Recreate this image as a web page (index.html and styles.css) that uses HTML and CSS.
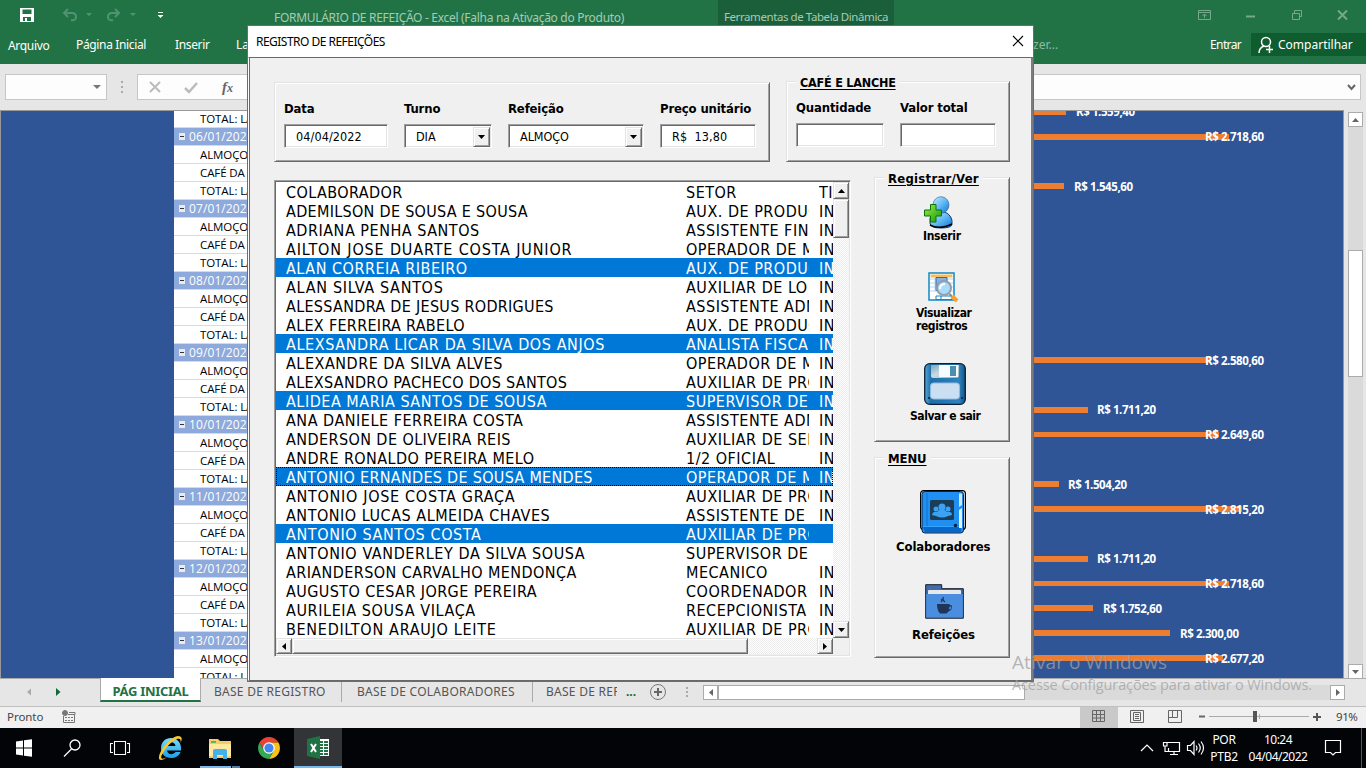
FILE: index.html
```html
<!DOCTYPE html>
<html lang="pt-BR">
<head>
<meta charset="utf-8">
<title>FORMULÁRIO DE REFEIÇÃO - Excel</title>
<link rel="stylesheet" href="styles.css">
</head>
<body>
<header class="titlebar">
  <svg class="quick" width="180" height="31" viewBox="0 0 180 31">
    <path d="M20 8h14v14H20z" fill="#fff"/><path d="M22.500 9.500h9v4.500h-9zM23 17h8v4h-8z" fill="#217346"/><path d="M25 18h2v3h-2z" fill="#fff"/>
    <g fill="none" stroke="#4f9470" stroke-width="2"><path d="M68 9l-4 4 4 4M64 13h8q4 0 4 4t-5 3"/><path d="M115 9l4 4-4 4M119 13h-7q-4 0-4 4t5 3"/></g>
    <path d="M86 13h6l-3 3zM130 13h6l-3 3z" fill="#4f9470"/><path d="M158 12h5v1h-5zM157.500 15h6l-3 3z" fill="#fff"/>
  </svg>
  <span class="doc-title">FORMULÁRIO DE REFEIÇÃO - Excel (Falha na Ativação do Produto)</span>
  <span class="tool-tab">Ferramentas de Tabela Dinâmica</span>
  <svg class="winctl" width="160" height="31" viewBox="0 0 160 31" fill="none" stroke="#75a88c">
    <path d="M4.500 10.500h12v9h-12zM4.500 12.500h12M10.500 18v-4M8.500 16l2-2 2 2"/><path d="M52 16.500h9" stroke-width="2"/><path d="M98.500 13.500h7v6h-7zM100.500 13v-2.500h7v6H106"/><path d="M144 10.500l9 9m0-9l-9 9" stroke-width="2"/>
  </svg>
</header>
<nav class="ribbon">
  <span class="r1">Arquivo</span><span class="r2">Página Inicial</span><span class="r3">Inserir</span><span class="r4">La</span>
  <span class="tell">zer...</span><span class="enter">Entrar</span>
  <span class="share"><svg width="16" height="18" viewBox="0 0 16 18" fill="none" stroke="#fff" stroke-width="1.500"><circle cx="8" cy="6" r="4.500"/><path d="M1 17q0-5 5-7M8 13.500h7M11.500 10v7"/></svg><span>Compartilhar</span></span>
</nav>
<div class="formula">
  <div class="namebox"><svg width="8" height="5"><path d="M0 0h8l-4 4z" fill="#777"/></svg></div>
  <svg class="dots" width="3" height="12"><path d="M0 0h2v2H0zM0 5h2v2H0zM0 10h2v2H0z" fill="#aaa"/></svg>
  <div class="fxbar">
    <svg width="110" height="25" viewBox="0 0 110 25"><path d="M12 7l10 10m0-10L12 17" stroke="#bbb" stroke-width="2"/><path d="M47 13l4 4 8-9" fill="none" stroke="#bbb" stroke-width="2.500"/><text x="84" y="17" font-family="Liberation Serif, serif" font-style="italic" font-weight="bold" font-size="15" fill="#666">f<tspan font-size="12">x</tspan></text></svg>
    <svg class="chev" width="9" height="7"><path d="M1 1l3.500 4L8 1" fill="none" stroke="#666" stroke-width="2"/></svg>
  </div>
</div>
<main class="workspace">
  <div class="sheet">
    <div class="pivot">
      <div class="pr first">TOTAL: LA</div>
      <div class="pr head"><i></i>06/01/202</div><div class="pr">ALMOÇO</div><div class="pr">CAFÉ DA</div><div class="pr">TOTAL: LA</div>
      <div class="pr head"><i></i>07/01/202</div><div class="pr">ALMOÇO</div><div class="pr">CAFÉ DA</div><div class="pr">TOTAL: LA</div>
      <div class="pr head"><i></i>08/01/202</div><div class="pr">ALMOÇO</div><div class="pr">CAFÉ DA</div><div class="pr">TOTAL: LA</div>
      <div class="pr head"><i></i>09/01/202</div><div class="pr">ALMOÇO</div><div class="pr">CAFÉ DA</div><div class="pr">TOTAL: LA</div>
      <div class="pr head"><i></i>10/01/202</div><div class="pr">ALMOÇO</div><div class="pr">CAFÉ DA</div><div class="pr">TOTAL: LA</div>
      <div class="pr head"><i></i>11/01/202</div><div class="pr">ALMOÇO</div><div class="pr">CAFÉ DA</div><div class="pr">TOTAL: LA</div>
      <div class="pr head"><i></i>12/01/202</div><div class="pr">ALMOÇO</div><div class="pr">CAFÉ DA</div><div class="pr">TOTAL: LA</div>
      <div class="pr head"><i></i>13/01/202</div><div class="pr">ALMOÇO</div><div class="pr">TOTAL: LA</div>
    </div>
    <svg class="chart" width="310" height="567" viewBox="1033 111 310 567">
      <g fill="#ed7d31"><path d="M1033 109h33v6h-33zM1033 134h196v6h-196zM1033 183h31v6h-31zM1033 357h177v6h-177zM1033 407h55v6h-55zM1033 432h186v5h-186zM1033 481h26v6h-26zM1033 506h209v6h-209zM1033 556h55v6h-55zM1033 581h196v5h-196zM1033 605h60v6h-60zM1033 630h137v6h-137zM1033 655h190v6h-190z"/></g>
      <g class="vals">
        <text x="1076" y="116" textLength="59">R$ 1.559,40</text><text x="1205" y="141" textLength="59">R$ 2.718,60</text>
        <text x="1074" y="191" textLength="59">R$ 1.545,60</text><text x="1205" y="365" textLength="59">R$ 2.580,60</text>
        <text x="1097" y="414" textLength="59">R$ 1.711,20</text><text x="1205" y="439" textLength="59">R$ 2.649,60</text>
        <text x="1068" y="489" textLength="59">R$ 1.504,20</text><text x="1205" y="514" textLength="59">R$ 2.815,20</text>
        <text x="1097" y="563" textLength="59">R$ 1.711,20</text><text x="1205" y="588" textLength="59">R$ 2.718,60</text>
        <text x="1103" y="613" textLength="59">R$ 1.752,60</text><text x="1180" y="638" textLength="59">R$ 2.300,00</text>
        <text x="1205" y="663" textLength="59">R$ 2.677,20</text>
      </g>
    </svg>
  </div>
  <div class="xl-vscroll"><span class="xb"><svg width="7" height="4"><path d="M0 4h7L3.500 0z" fill="#666"/></svg></span><span class="xthumb"></span><span class="xb"><svg width="7" height="4"><path d="M0 0h7L3.500 4z" fill="#666"/></svg></span></div>
</main>
<div class="tabs">
  <span class="tabnav"><svg width="100" height="27"><path d="M31 9.500v7l-4-3.500z" fill="#aaa"/><path d="M56 9v8l4.500-4z" fill="#0e6b38"/></svg></span>
  <b class="tab-active">PÁG INICIAL</b><span class="tab t2">BASE DE REGISTRO</span><span class="tab t3">BASE DE COLABORADORES</span><span class="tab t4">BASE DE REF</span><b class="more">...</b>
  <svg class="plus" width="46" height="27" fill="none"><circle cx="10" cy="13" r="7.500" stroke="#777"/><path d="M6 13h8M10 9v8" stroke="#666" stroke-width="2"/><path d="M38 8h2v2h-2zM38 12h2v2h-2zM38 16h2v2h-2z" fill="#aaa"/></svg>
  <div class="xl-hscroll"><span class="xb"><svg width="4" height="7"><path d="M4 0v7L0 3.500z" fill="#666"/></svg></span><span class="hthumb"></span><span class="xb last"><svg width="4" height="7"><path d="M0 0v7l4-3.500z" fill="#666"/></svg></span></div>
</div>
<div class="status">
  <span class="ready">Pronto</span>
  <svg width="14" height="14" fill="none" stroke="#777"><path d="M7 2.500h6v2H6M1.500 6v6.500h11V5M3 7.500h2m1 0h2m1 0h2M3 10.500h2m1 0h2m1 0h2"/><circle cx="3" cy="3" r="2.500" fill="#777"/></svg>
  <svg class="views" width="234" height="21" fill="none" stroke="#666"><path d="M0 0h38v21H0z" fill="#c9c9c9" stroke="none"/><path d="M12.500 3.500h12v11h-12zM12.500 7.500h12M12.500 11h12M16.500 3v12M20.500 3v12"/><path d="M50.500 3.500h13v12h-13zM53.500 5.500h7v8h-7zM55 7.500h4M55 9.500h4M55 11.500h4"/><path d="M88.500 3.500h13v12h-13zM88.500 10.500h9V4M92.500 4v6.500"/><path d="M119 9.500h6" stroke-width="2"/><path d="M129 9.500h100M179.500 7v5" stroke="#aaa"/><path d="M173 4h4v11h-4z" fill="#555" stroke="none"/></svg>
  <svg class="zplus" width="8" height="8"><path d="M0 4h8M4 0v8" stroke="#555" stroke-width="2"/></svg>
  <span class="pct">91%</span>
</div>
<footer class="taskbar">
  <svg width="342" height="40" viewBox="0 0 342 40">
    <defs><linearGradient id="ieb" x2="0" y2="1"><stop stop-color="#78dcff"/><stop offset="1" stop-color="#19a0e8"/></linearGradient></defs>
    <path d="M16 13.500l7-1v7h-7zM24 12.300l8-1.100v8.300h-8zM16 20.500h7v7l-7-1zM24 20.500h8v8.300l-8-1.100z" fill="#fff"/>
    <g fill="none" stroke="#fff" stroke-width="1.300"><circle cx="75" cy="17" r="5"/><path d="M71.500 21L64 28.500"/><path d="M114.500 13.500h11v13h-11zM113 15.500h-2.500v9h2.500M127 15.500h2.500v9H127" stroke-width="1.100"/></g>
    <path fill-rule="evenodd" d="M161 20c0-6 4.500-10 10-10s10 4 10 10v2.500h-14c.5 4 6 5 8.500 1.500h5c-1.500 4-5 6-9.500 6-6 0-10-4-10-10zm6-2h8.500c-.5-5-8-5-8.500 0z" fill="url(#ieb)"/><path d="M163 25c-4 6-1 7 4 4-4 4-9 4-8 0 1-8 12-20 19-21 5 0 4 4 2.500 7 .5-3 0-5-3.500-4-5 2-11 8-14 14z" fill="#f8c832"/>
    <path d="M209 11h9l2 2h11v17h-22z" fill="#f5cd68"/><path d="M211 13h5v2h-5z" fill="#58b85c"/><path d="M209 16h22v12h-22z" fill="#ffe9a0"/><path d="M213 23q0-2 2-2h10q2 0 2 2v8h-4v-4h-6v4h-4z" fill="#43b2ec"/>
    <path d="M200 38h31v2h-31z" fill="#76b9ed"/><path d="M232 38h8v2h-8z" fill="#527ea8"/>
    <path d="M269 14.500h9.500a11 11 0 0 0-19 0l4.700 8z" fill="#ea4335"/><path d="M273.800 22.800L269 31a11 11 0 0 0 9.500-16.500H269z" fill="#fbc116"/><path d="M264.200 22.800l-4.700-8.300A11 11 0 0 0 269 31l4.800-8.200z" fill="#34a853"/><circle cx="269" cy="20" r="5.800" fill="#fff"/><circle cx="269" cy="20" r="4.600" fill="#4285f4"/>
    <path d="M294 0h48v40h-48z" fill="#333437"/><path d="M294 38h48v2h-48z" fill="#76b9ed"/><path d="M318 11h11v17h-11z" fill="#fff"/><path d="M320 13h3v2h-3zM324 13h4v2h-4zM320 16h3v2h-3zM324 16h4v2h-4zM320 19h3v2h-3zM324 19h4v2h-4zM320 22h3v2h-3zM324 22h4v2h-4zM320 25h3v2h-3zM324 25h4v2h-4z" fill="#207245"/><path d="M307 11l13-3v23l-13-3z" fill="#207245"/><path d="M311 16l5 8M316 16l-5 8" stroke="#fff" stroke-width="2"/>
  </svg>
  <svg class="tray" width="66" height="40" fill="none" stroke="#fff" stroke-width="1.200"><path d="M1 23l6-6 6 6M27 14.500h12.500v9H28.500V20M34 24v2.500M30 26.500h8M23.500 14.500h3.500v3.500h-3.500zM25 18v5.500h4M47.500 17.500h3l3.500-4v13l-3.500-4h-3zM56 17.500q2 2.500 0 5M58.500 15.500q3.500 4.500 0 9M61 13.500q5 6.500 0 13"/></svg>
  <span class="lang">POR<br>PTB2</span><span class="clock">10:24<br>04/04/2022</span>
  <svg class="notif" width="18" height="18" fill="none" stroke="#fff" stroke-width="1.200"><path d="M1.500 1.500h15v12H11.500L9 16 6.500 13.500h-5z"/></svg>
  <i class="peek"></i>
</footer>

<section class="dialog">
  <div class="dlg-title"><span>REGISTRO DE REFEIÇÕES</span><svg width="12" height="12"><path d="M1 1l10 10M11 1L1 11" stroke="#000" stroke-width="1.100"/></svg></div>
  <div class="dlg-body">
    <div class="top-row">
      <div class="frame f-main">
        <label class="fld w-data"><b>Data</b><span class="inp">04/04/2022</span></label>
        <label class="fld w-turno"><b>Turno</b><span class="inp combo">DIA<i class="btn"><svg width="7" height="4"><path d="M0 0h7L3.500 4z"/></svg></i></span></label>
        <label class="fld w-ref"><b>Refeição</b><span class="inp combo">ALMOÇO<i class="btn"><svg width="7" height="4"><path d="M0 0h7L3.500 4z"/></svg></i></span></label>
        <label class="fld w-preco"><b>Preço unitário</b><span class="inp">R$&nbsp; 13,80</span></label>
      </div>
      <div class="frame f-cafe"><u class="legend">CAFÉ E LANCHE</u>
        <label class="fld w-qtd"><b>Quantidade</b><span class="inp"></span></label>
        <label class="fld w-val"><b>Valor total</b><span class="inp"></span></label>
      </div>
    </div>
    <div class="bottom-row">
      <div class="list">
        <div class="rows">
          <div class="row kb"><span>COLABORADOR</span><span>SETOR</span><span>TIPO</span></div>
          <div class="row ka"><span>ADEMILSON DE SOUSA E SOUSA</span><span>AUX. DE PRODUÇ</span><span>INT</span></div>
          <div class="row kc"><span>ADRIANA PENHA SANTOS</span><span>ASSISTENTE FIN</span><span>INT</span></div>
          <div class="row kf"><span>AILTON JOSE DUARTE COSTA JUNIOR</span><span>OPERADOR DE M</span><span>INT</span></div>
          <div class="row kc sel"><span>ALAN CORREIA RIBEIRO</span><span>AUX. DE PRODUÇ</span><span>INT</span></div>
          <div class="row ke"><span>ALAN SILVA SANTOS</span><span>AUXILIAR DE LO</span><span>INT</span></div>
          <div class="row ka"><span>ALESSANDRA DE JESUS RODRIGUES</span><span>ASSISTENTE ADM</span><span>INT</span></div>
          <div class="row ka"><span>ALEX FERREIRA RABELO</span><span>AUX. DE PRODUÇ</span><span>INT</span></div>
          <div class="row kd sel"><span>ALEXSANDRA LICAR DA SILVA DOS ANJOS</span><span>ANALISTA FISCA</span><span>INT</span></div>
          <div class="row kc"><span>ALEXANDRE DA SILVA ALVES</span><span>OPERADOR DE M</span><span>INT</span></div>
          <div class="row ka"><span>ALEXSANDRO PACHECO DOS SANTOS</span><span>AUXILIAR DE PRO</span><span>INT</span></div>
          <div class="row kc sel"><span>ALIDEA MARIA SANTOS DE SOUSA</span><span>SUPERVISOR DE</span><span>INT</span></div>
          <div class="row kc"><span>ANA DANIELE FERREIRA COSTA</span><span>ASSISTENTE ADM</span><span>INT</span></div>
          <div class="row kb"><span>ANDERSON DE OLIVEIRA REIS</span><span>AUXILIAR DE SER</span><span>INT</span></div>
          <div class="row kb"><span>ANDRE RONALDO PEREIRA MELO</span><span>1/2 OFICIAL</span><span>INT</span></div>
          <div class="row ka sel focus"><span>ANTONIO ERNANDES DE SOUSA MENDES</span><span>OPERADOR DE M</span><span>INT</span></div>
          <div class="row ke"><span>ANTONIO JOSE COSTA GRAÇA</span><span>AUXILIAR DE PRO</span><span>INT</span></div>
          <div class="row kc"><span>ANTONIO LUCAS ALMEIDA CHAVES</span><span>ASSISTENTE DE</span><span>INT</span></div>
          <div class="row kd sel"><span>ANTONIO SANTOS COSTA</span><span>AUXILIAR DE PRO</span><span></span></div>
          <div class="row kd"><span>ANTONIO VANDERLEY DA SILVA SOUSA</span><span>SUPERVISOR DE</span><span></span></div>
          <div class="row kb"><span>ARIANDERSON CARVALHO MENDONÇA</span><span>MECANICO</span><span>INT</span></div>
          <div class="row kb"><span>AUGUSTO CESAR JORGE PEREIRA</span><span>COORDENADOR</span><span>INT</span></div>
          <div class="row kd"><span>AURILEIA SOUSA VILAÇA</span><span>RECEPCIONISTA</span><span>INT</span></div>
          <div class="row ke"><span>BENEDILTON ARAUJO LEITE</span><span>AUXILIAR DE PRO</span><span>INT</span></div>
        </div>
        <div class="vs"><i class="btn"><svg width="7" height="4"><path d="M0 4h7L3.500 0z"/></svg></i><i class="btn vt"></i><i class="btn end"><svg width="7" height="4"><path d="M0 0h7L3.500 4z"/></svg></i></div>
        <div class="hs"><i class="btn"><svg width="4" height="7"><path d="M4 0v7L0 3.500z"/></svg></i><i class="btn ht"></i><i class="btn end"><svg width="4" height="7"><path d="M0 0v7l4-3.500z"/></svg></i></div>
      </div>
      <div class="side">
        <div class="frame f-reg"><u class="legend">Registrar/Ver</u>
          <div class="act a1">
            <svg width="30" height="34" viewBox="0 0 30 34"><defs><linearGradient id="pb" x2="1" y2="1"><stop stop-color="#c6ecff"/><stop offset=".5" stop-color="#62b9f5"/><stop offset="1" stop-color="#1273d6"/></linearGradient><linearGradient id="gr" x2="1" y2="1"><stop stop-color="#9cee4a"/><stop offset="1" stop-color="#149708"/></linearGradient></defs>
            <path d="M6 26q-1-8 6-10h9q8 4 7 12 0 4-11 4T6 27z" fill="url(#pb)" stroke="#0b3b78"/><path d="M6 29q9 5 22-1" fill="none" stroke="#000" stroke-width="1.500"/><ellipse cx="17" cy="9" rx="8" ry="8.300" fill="url(#pb)" stroke="#285f92" stroke-width=".6"/><path d="M6.500 8.500h5.500v5.500h5.500v6H12v6H6.500v-6h-6v-6h6z" fill="url(#gr)" stroke="#0b7307"/></svg>
            <b>Inserir</b></div>
          <div class="act a2">
            <svg width="31" height="31" viewBox="0 0 31 31"><path d="M1 1h25v27H1z" fill="#fff" stroke="#1286c3" stroke-width="1.500"/><path d="M2.500 2.500h22v3h-22z" fill="#f9bd54"/><path d="M2 7h23M2 11h23M2 15h23M2 19h23M7 6v14M18 6v19" stroke="#bcd8ef"/><path d="M8 5.500h11v13H8z" fill="#87b1e3" stroke="#356da8"/><path d="M8 24h16v3.500H8zM13 24v4" fill="#fff" stroke="#1286c3"/><circle cx="16" cy="16" r="7" fill="#a9dcfa" stroke="#929eaa" stroke-width="2"/><path d="M12 17q0-5 5-5" stroke="#fff" fill="none" stroke-width="2"/><path d="M21.500 22l2 2" stroke="#888" stroke-width="2"/><path d="M24 24l5 5" stroke="#f0a52d" stroke-width="4"/></svg>
            <b>Visualizar<br>registros</b></div>
          <div class="act a3">
            <svg width="42" height="42" viewBox="0 0 42 42"><defs><linearGradient id="dk" x2="1"><stop stop-color="#58a9d8"/><stop offset=".15" stop-color="#1d6fa9"/><stop offset=".85" stop-color="#2c83bd"/><stop offset="1" stop-color="#155080"/></linearGradient><linearGradient id="mt" x2="1" y2="1"><stop stop-color="#7ba5b8"/><stop offset=".45" stop-color="#c9dbe3"/><stop offset="1" stop-color="#8eb0c2"/></linearGradient></defs>
            <rect x=".7" y=".7" width="40.600" height="40.600" rx="5" fill="url(#dk)" stroke="#0b2036" stroke-width="1.300"/><path d="M7 2h28v11q0 2-2 2H9q-2 0-2-2z" fill="url(#mt)"/><path d="M15 2h19v12H15z" fill="#f5fbff"/><path d="M26 3h6v10h-6z" fill="#4a90ae"/><rect x="6.500" y="20" width="29" height="16" rx="3" fill="#cbdff2" stroke="#8fbbe0"/><path d="M4 35h2M37 35h2" stroke="#0b3154" stroke-width="2"/></svg>
            <b>Salvar e sair</b></div>
        </div>
        <div class="frame f-menu"><u class="legend">MENU</u>
          <div class="act a4">
            <svg width="46" height="44" viewBox="0 0 46 44"><rect x=".6" y=".6" width="44.800" height="39" rx="3" fill="#f4f4f4" stroke="#000" stroke-width="1.200"/><path d="M2 40h42v4H2z" fill="#f0f0f0"/><rect x="2" y="1.500" width="41.500" height="41.500" rx="3" fill="#1f8ff2" stroke="#06254b"/><path d="M3 37h38v5H5z" fill="#0868c9"/><path d="M7 3v34" stroke="#1573c9"/><path d="M3 36.500h35" stroke="#36a3ff"/><path d="M39 3.500h3V15l-3 2z" fill="#cfe6fa"/><path d="M39 20l3-2v20h-3z" fill="#e2f1ff"/><rect x="10" y="10" width="24" height="20" rx="1.500" fill="#1c3d58"/><g fill="#3ba2f2"><circle cx="22" cy="17" r="3.500"/><circle cx="16" cy="19" r="2.500"/><circle cx="28" cy="19" r="2.500"/><path d="M12 25q1-4 5-3l2-2h6l2 2q5-1 5 3l-4 1q-6 3-12 0z"/></g><circle cx="35.500" cy="35.500" r="1.800" fill="#06254b"/></svg>
            <b>Colaboradores</b></div>
          <div class="act a5">
            <svg width="39" height="35" viewBox="0 0 39 35"><path d="M.7.700h16v4h21.600v29.500H.700z" fill="#416caa" stroke="#101a2b"/><path d="M3 7q0-1 1-1h31q1 0 1 1v4H3z" fill="#e8e8ea"/><path d="M1.200 10h36.600v23.500H1.200z" fill="#4b8ee0"/><path d="M12 20h12.500v1h1.500q2 1 0 5l-2.500 1.500-2 2H15q-3-3-3-9.500zM24.500 22.500l-.5 3q3 0 2-3z" fill="#1f355a"/><path d="M16 18q2-2 0-3M20 18q-3-2-1.500-5" stroke="#1f355a" fill="none" stroke-width="1.300"/></svg>
            <b>Refeições</b></div>
        </div>
      </div>
    </div>
  </div>
</section>
<div class="watermark"><p class="wm1">Ativar o Windows</p><p class="wm2">Acesse Configurações para ativar o Windows.</p></div>
</body>
</html>
```

FILE: styles.css
```css
* { box-sizing: border-box; }
body { margin: 0; width: 1366px; height: 768px; overflow: hidden; display: flex; flex-direction: column; position: relative; font: 12px "Noto Sans", "Open Sans", sans-serif; background: #e6e6e6; color: #444; white-space: nowrap; }
svg { display: block; flex: none; }
i { font-style: normal; }

.titlebar { height: 31px; flex: none; display: flex; align-items: center; background: #217346; color: #a6cbb5; }
.doc-title { margin-left: 94px; width: 444px; margin-top: 3px; letter-spacing: -0.3px; }
.tool-tab { width: 176px; height: 31px; background: #1b5e3a; padding: 8px 0 0 6px; line-height: 18px; font-size: 11.5px; letter-spacing: -0.42px; }
.winctl { margin-left: 300px; }

.ribbon { height: 33px; flex: none; display: flex; align-items: flex-start; padding-left: 8px; line-height: 28px; background: #217346; color: #fff; }
.r1 { width: 68px; padding-top: 1px; letter-spacing: -0.3px; }
.r2 { width: 99px; letter-spacing: -0.35px; }
.r3 { width: 61px; letter-spacing: -0.6px; }
.r2, .r3 { letter-spacing: -0.35px; }
.r4 { width: 797px; }
.tell { width: 177px; color: #90b9a3; }
.enter { width: 41px; letter-spacing: -0.6px; }
.share { width: 115px; height: 23px; margin-top: 2px; display: flex; align-items: center; gap: 4px; padding-left: 7px; background: #0f5c2f; }

.formula { height: 46px; flex: none; display: flex; align-items: center; padding: 0 5px 0 5px; }
.namebox { width: 102px; height: 26px; border: 1px solid #c6c6c6; background: #fdfdfd; display: flex; align-items: center; justify-content: flex-end; padding-right: 5px; }
.dots { margin: 0 13px 0 14px; }
.fxbar { flex: 1; height: 26px; border: 1px solid #c6c6c6; background: #fdfdfd; display: flex; align-items: center; justify-content: space-between; padding-right: 4px; }

.workspace { height: 568px; flex: none; display: flex; }
.sheet { width: 1344px; border: solid #999; border-width: 1px 1px 0 1px; background: #2f5597; display: flex; justify-content: space-between; overflow: hidden; }
.pivot { margin-left: 173px; width: 90px; }
.pr { height: 18px; background: #fff; border-bottom: 1px solid #d0dcee; padding-left: 26px; line-height: 17px; color: #000; font-size: 11.5px; letter-spacing: -0.1px; font-family: "Open Sans", sans-serif; overflow: hidden; }
.first { height: 17px; line-height: 15px; }
.head { background: #8ea9db; color: #fff; padding-left: 5px; font-size: 12px; letter-spacing: .1px; display: flex; align-items: center; gap: 4px; }
.head i { width: 6px; height: 7px; background: linear-gradient(#333, #333) center / 4px 1px no-repeat #e8ebf2; border: 0; }
.vals { font: bold 11.5px "Open Sans", sans-serif; fill: #fff; }
.xl-vscroll { margin: 2px 0 0 4px; width: 15px; height: 566px; background: #dadada; display: flex; flex-direction: column; }
.xb { width: 15px; height: 15px; flex: none; background: #fff; border: 1px solid #ababab; display: flex; align-items: center; justify-content: center; }
.xthumb { height: 127px; margin: 123px 0 287px; flex: none; background: #fff; border: 1px solid #ababab; }

.tabs { height: 29px; flex: none; display: flex; border-bottom: 1px solid #c0c0c0; border-top: 1px solid #ababab; line-height: 26px; color: #555; }
.tabnav { width: 100px; flex: none; }
.tab-active { width: 101px; height: 24px; margin-top: -1px; background: #fff; border: 1px solid #ababab; border-top: 0; border-bottom: 2px solid #217346; color: #217346; font-size: 13px; text-align: center; letter-spacing: -0.3px; flex: none; }
.tab { height: 23px; flex: none; overflow: hidden; font-size: 12px; letter-spacing: .27px; }
.t2 { width: 141px; padding-left: 13px; border-right: 1px solid #aaa; }
.t3 { width: 191px; padding-left: 15px; border-right: 1px solid #aaa; }
.t4 { width: 84px; margin-right: 9px; padding-left: 13px; }
.more { width: 22px; color: #0e6b38; }
.xl-hscroll { width: 642px; height: 15px; margin: 6px 0 0 9px; background: #dadada; display: flex; }
.hthumb { width: 307px; background: #fff; border: 1px solid #ababab; }
.last { margin-left: auto; }

.status { height: 21px; flex: none; display: flex; align-items: center; background: #f0f0f0; font-size: 11.5px; line-height: 16px; }
.ready { width: 55px; padding: 0 0 2px 7px; letter-spacing: -0.05px; }
.status > svg:nth-child(2) { margin: 0 0 1px 7px; }
.views { margin-left: 1004px; }
.zplus { margin: -1px 0 0 -1px; }
.pct { margin-left: 15px; padding-bottom: 2px; letter-spacing: -0.4px; }

.taskbar { height: 40px; flex: none; display: flex; align-items: center; background: #020408; color: #fff; font-size: 12px; line-height: 17px; text-align: center; }
.tray { margin-left: 798px; }
.lang { width: 32px; margin-left: 2px; letter-spacing: -0.3px; }
.clock { width: 62px; margin-left: 7px; letter-spacing: -0.5px; }
.notif { margin-left: 15px; }
.peek { width: 1px; height: 40px; margin-left: auto; margin-right: 4px; background: #555; }

.dialog { position: absolute; left: 247px; top: 25px; width: 787px; height: 657px; border: 1px solid #1883d7; background: #f0f0f0; font-family: "DejaVu Sans Condensed", "DejaVu Sans", sans-serif; font-stretch: condensed; color: #000; }
.dlg-title { height: 31px; background: #fff; display: flex; align-items: center; justify-content: space-between; padding: 0 9px 1px 8px; font: 12px "Noto Sans", sans-serif; letter-spacing: -0.52px; }
.dlg-body { height: 624px; border: 1px solid #696969; border-left-color: #fff; border-right: 2px solid #7c7c7c; box-shadow: inset 1px 0 #696969; padding: 23px 0 0 25px; }
.top-row { display: flex; gap: 16px; }
.bottom-row { display: flex; gap: 23px; margin-top: 15px; }
.frame { border: 1px solid; border-color: #e3e3e3 #696969 #696969 #e3e3e3; box-shadow: inset 1px 1px #fff, inset -1px -1px #a0a0a0; display: flex; }
.f-main { width: 496px; height: 80px; margin-top: 1px; padding: 18px 0 0 9px; }
.f-cafe { width: 224px; height: 81px; padding: 0 0 0 9px; flex-wrap: wrap; align-content: flex-start; }
.legend { display: block; background: #f0f0f0; font-weight: bold; font-size: 12.5px; line-height: 16px; height: 18px; padding: 0 4px; text-underline-offset: 2px; }
.f-cafe .legend { margin: -7px 100px 7px 0; letter-spacing: -0.22px; }
.fld { display: flex; flex-direction: column; }
.fld b { font-size: 13px; line-height: 16px; height: 23px; letter-spacing: -0.15px; }
.w-data { width: 104px; margin-right: 16px; }
.w-turno { width: 88px; margin-right: 16px; }
.w-ref { width: 136px; margin-right: 16px; }
.w-preco { width: 96px; }
.w-qtd { width: 88px; margin-right: 16px; }
.w-val { width: 96px; }
.inp { height: 24px; border: 1px solid; border-color: #a0a0a0 #fff #fff #a0a0a0; box-shadow: inset 1px 1px #696969, inset -1px -1px #e3e3e3; background: #fff; display: flex; align-items: center; justify-content: space-between; padding: 1px 1px 0 11px; font-size: 12.5px; letter-spacing: .1px; }
.combo { letter-spacing: -0.05px; }
.btn { width: 17px; height: 20px; flex: none; background: #f0f0f0; border: 1px solid; border-color: #e3e3e3 #696969 #696969 #e3e3e3; box-shadow: inset 1px 1px #fff, inset -1px -1px #a0a0a0; display: flex; align-items: center; justify-content: center; }

.list { width: 577px; height: 477px; margin-top: 3px; background: #f0f0f0; border: 1px solid; border-color: #a0a0a0 #fff #fff #a0a0a0; box-shadow: inset 1px 1px #696969, inset -1px -1px #e3e3e3; padding: 1px; display: grid; grid-template: 456px 17px / 557px 16px; }
.rows { background: #fff; overflow: hidden; font-size: 16px; }
.row { height: 19px; line-height: 21px; padding-left: 10px; display: grid; grid-template-columns: 400px 123px 24px; }
.row span { overflow: hidden; height: 19px; }
.row span:nth-child(2) { letter-spacing: .5px; }
.row span:nth-child(3) { margin-left: 10px; width: 14px; letter-spacing: .4px; }
.ka { letter-spacing: .3px; }
.kb { letter-spacing: .42px; }
.kc { letter-spacing: .52px; }
.kd { letter-spacing: .6px; }
.ke { letter-spacing: .7px; }
.kf { letter-spacing: .85px; }
.sel { background: #0078d7; color: #fff; }
.focus { outline: 1px dotted #000; outline-offset: -1px; }
.vs, .hs { display: flex; background: repeating-conic-gradient(#fff 0 25%, #ececec 0 50%) 0 0 / 2px 2px; }
.vs { flex-direction: column; }
.vs .btn { width: 16px; height: 17px; }
.vs .vt { height: 39px; }
.vs .end { margin-top: auto; }
.hs { height: 16px; }
.hs .btn { width: 16px; height: 16px; }
.hs .ht { width: 456px; }
.hs .end { margin-left: auto; }

.side { width: 136px; display: flex; flex-direction: column; gap: 15px; margin-top: 0; }
.f-reg, .f-menu { flex-direction: column; align-items: flex-start; }
.f-reg { height: 265px; }
.f-menu { height: 201px; }
.side .legend { margin: -7px 0 0 9px; height: 17px; font-size: 13px; letter-spacing: .25px; }
.side .f-menu .legend { letter-spacing: -0.1px; }
.act { display: flex; flex-direction: column; align-items: center; font-size: 12px; letter-spacing: -0.3px; line-height: 13px; }
.act svg { margin-bottom: 3px; }
.a1 { margin: 8px 0 0 48px; }
.a1 svg { margin: 0 5px 0 0; }
.a2 { margin: 29px 0 0 41px; }
.a2 svg { margin-bottom: 4px; }
.a3 { margin: 30px 0 0 35px; }
.a3 svg { margin-bottom: 5px; }
.a2, .a3 { letter-spacing: -0.4px; }
.a3 { letter-spacing: -0.42px; }
.a4, .a5 { font-size: 13px; letter-spacing: -0.1px; }
.a4 { margin: 22px 0 0 21px; }
.a4 svg { margin-bottom: 6px; }
.a5 { margin: 31px 0 0 37px; }
.a5 svg { margin: 0 0 9px 2px; }

.watermark { position: absolute; left: 1012px; top: 651px; color: rgba(160,160,160,.75); font-family: "Open Sans", "Noto Sans", sans-serif; }
.watermark p { margin: 0; }
.wm1 { font-size: 19px; line-height: 23px; letter-spacing: .1px; }
.wm2 { font-size: 14.500px; line-height: 21px; letter-spacing: -0.12px; }
```
